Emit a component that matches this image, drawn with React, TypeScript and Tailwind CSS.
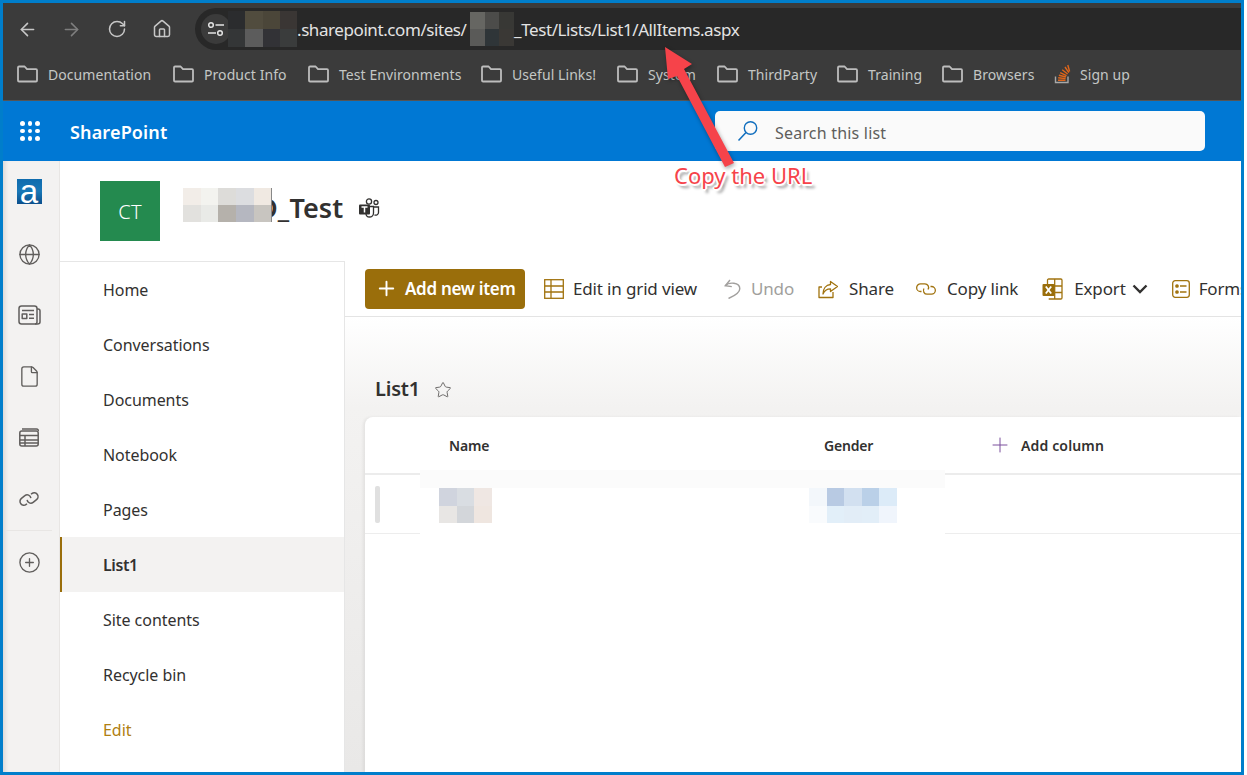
import React from "react";
import { ArrowLeft, ArrowRight, RotateCw, House, Globe, File, CirclePlus, Plus, Star } from "lucide-react";

const font = "font-['Noto_Sans','Open_Sans',sans-serif]";

function Pixels({ cols, colors, cellW, cellH, className }: { cols: number; colors: string[]; cellW: number; cellH: number; className?: string }) {
  return (
    <div className={`grid shrink-0 ${className ?? ""}`} style={{ gridTemplateColumns: `repeat(${cols}, ${cellW}px)`, gridAutoRows: `${cellH}px` }}>
      {colors.map((c, i) => <div key={i} style={{ background: c }} />)}
    </div>
  );
}

function FolderIcon() {
  return (
    <svg width="21" height="18" viewBox="0 0 21 18" fill="none" className="shrink-0">
      <path d="M1 15V2.6C1 2 1.5 1.5 2.1 1.5H7.6L10 4.2H19C19.6 4.2 20 4.7 20 5.2V15.4C20 16 19.6 16.5 19 16.5H2.1C1.5 16.5 1 16 1 15.4Z" stroke="#bdbdbd" strokeWidth="1.8" strokeLinejoin="round" />
    </svg>
  );
}

function SOIcon() {
  return (
    <svg width="17" height="20" viewBox="0 0 17 20" fill="none" className="shrink-0">
      <path d="M1.5 12.5V18.5H14V12.5" stroke="#a8a8a8" strokeWidth="1.4" />
      <path d="M4 16.2H11.5M4.2 13.8L11.6 14.6M4.9 11.3L12 13M6.2 8.6L12.6 11.6M8.2 5.8L13.6 10M11 3L14.8 8.6M13.8 1L15.6 7.5" stroke="#e0661a" strokeWidth="1.4" />
    </svg>
  );
}

function Bookmark({ label, w, so }: { label: string; w: number; so?: boolean }) {
  return (
    <div className={`flex items-center shrink-0 ${so ? "gap-[9px]" : "gap-[10px]"}`}>
      {so ? <SOIcon /> : <FolderIcon />}
      <span className="text-[14px] text-[#c4c7c5] whitespace-nowrap tracking-[0.07px]" style={{ width: w }}>{label}</span>
    </div>
  );
}

function Tune() {
  return (
    <svg width="18" height="16" viewBox="0 0 18 16" fill="none">
      <circle cx="4" cy="4" r="2.3" stroke="#e3e3e3" strokeWidth="1.5" />
      <path d="M8.5 4H17M1 12H9" stroke="#e3e3e3" strokeWidth="1.5" />
      <circle cx="13" cy="12" r="2.3" stroke="#e3e3e3" strokeWidth="1.5" />
    </svg>
  );
}

function Waffle() {
  return (
    <div className="grid grid-cols-3 gap-[3px] w-[20px]">
      {Array.from({ length: 9 }).map((_, i) => <div key={i} className="w-[4.5px] h-[4.5px] rounded-full bg-white" />)}
    </div>
  );
}

function SearchIcon() {
  return (
    <svg width="22" height="22" viewBox="0 0 22 22" fill="none">
      <circle cx="13.5" cy="8" r="6.2" stroke="#106ebe" strokeWidth="1.4" />
      <path d="M9 12.5L1.5 20.5" stroke="#106ebe" strokeWidth="1.5" />
    </svg>
  );
}

function RailNews() {
  return (
    <svg width="23" height="20" viewBox="0 0 23 20" fill="none" stroke="#605e5c" strokeWidth="1.5" strokeLinejoin="round">
      <path d="M19 4V17C19 18 18.2 19 17 19H3.5C2 19 1 18 1 16.5V3.5C1 2 2 1 3.5 1H16.5C18 1 19 2 19 3.5Z" />
      <path d="M19 4H20C21.2 4 22 4.8 22 6V17C22 18.2 21 19 19.5 19H17" />
      <rect x="4.2" y="9" width="4.6" height="4.6" />
      <path d="M4 5.5H16M11 9.5H16M11 13.2H16" />
    </svg>
  );
}

function RailLink() {
  return (
    <svg width="22" height="22" viewBox="0 0 22 22" fill="none" stroke="#605e5c" strokeWidth="1.5">
      <g transform="translate(1 4) rotate(-38 10 7)">
        <path d="M5.5 9.5H4.5A3.7 3.7 0 0 1 4.5 1.8H8.8A3.7 3.7 0 0 1 12 7.5" />
        <path d="M14.5 4.5H15.5A3.7 3.7 0 0 1 15.5 12.2H11.2A3.7 3.7 0 0 1 8 6.5" />
      </g>
    </svg>
  );
}

function RailTable() {
  return (
    <svg width="22" height="20" viewBox="0 0 22 20" fill="none" stroke="#605e5c" strokeWidth="1.5" strokeLinejoin="round">
      <rect x="1.8" y="3" width="18.4" height="15" rx="2" />
      <path d="M4 1H18.5C20 1 20.5 2 20.2 3M2 7.5H20M2 12H20M2 15H20M7 7.5V18" />
    </svg>
  );
}

function GridIcon() {
  return (
    <svg width="20" height="20" viewBox="0 0 20 20" fill="none" stroke="#a1730f" strokeWidth="1.3">
      <rect x="0.7" y="0.7" width="18.6" height="18.6" />
      <path d="M0.7 7H19.3M0.7 13H19.3M7 0.7V19.3" />
    </svg>
  );
}

function UndoIcon() {
  return (
    <svg width="17" height="20" viewBox="0 0 17 20" fill="none" stroke="#a19f9d" strokeWidth="1.4">
      <path d="M6 1L1.2 6.8L7.8 7.6" />
      <path d="M1.2 6.8C5 2.8 15.8 3 15.8 9.8C15.8 13.5 11.5 16.5 4.5 19.5" />
    </svg>
  );
}

function ShareIcon() {
  return (
    <svg width="20" height="20" viewBox="0 0 20 20" fill="none" stroke="#a1730f" strokeWidth="1.3" strokeLinejoin="round">
      <path d="M4 8H1V18.5H15V13" />
      <path d="M12.5 2.5L19.5 7.5L12.5 12.5V9.8C9 9.8 6.5 11 5 15C5 9.5 8 5.8 12.5 5.5Z" />
    </svg>
  );
}

function LinkIcon() {
  return (
    <svg width="20" height="14" viewBox="0 0 20 14" fill="none" stroke="#a1730f" strokeWidth="1.3">
      <path d="M5.5 9.5H4.5A3.7 3.7 0 0 1 4.5 1.8H8.8A3.7 3.7 0 0 1 12 7.5" />
      <path d="M14.5 4.5H15.5A3.7 3.7 0 0 1 15.5 12.2H11.2A3.7 3.7 0 0 1 8 6.5" />
    </svg>
  );
}

function ExcelIcon() {
  return (
    <svg width="21" height="22" viewBox="0 0 21 22" fill="none">
      <path d="M5.5 6V2.2C5.5 1.5 6 1 6.7 1H18.8C19.5 1 20 1.5 20 2.2V19.8C20 20.5 19.5 21 18.8 21H6.7" stroke="#a1730f" strokeWidth="1.3" />
      <path d="M12.7 1V21M5.5 8H20M12.7 14.5H20" stroke="#a1730f" strokeWidth="1.3" />
      <rect x="0.5" y="6" width="12" height="12" rx="1" fill="#9a6e0b" />
      <path d="M3.8 8.5L9.2 15.5M9.2 8.5L3.8 15.5" stroke="#fff" strokeWidth="1.8" />
    </svg>
  );
}

function FormsIcon() {
  return (
    <svg width="18" height="18" viewBox="0 0 18 18" fill="none" stroke="#a1730f" strokeWidth="1.3">
      <rect x="0.7" y="0.7" width="16.6" height="16.6" rx="2.5" />
      <circle cx="5" cy="6" r="1.2" fill="#a1730f" />
      <circle cx="5" cy="12" r="1.2" fill="#a1730f" />
      <path d="M8 6H14.5M8 12H14.5" />
    </svg>
  );
}

function TeamsIcon() {
  return (
    <svg width="22" height="22" viewBox="0 0 22 22" fill="none">
      <circle cx="11" cy="4.5" r="2.6" stroke="#323130" strokeWidth="1.3" />
      <circle cx="18" cy="5.5" r="2" stroke="#323130" strokeWidth="1.3" />
      <path d="M15 10H20.5V15.5C20.5 17.5 18.5 18.5 16.5 18" stroke="#323130" strokeWidth="1.3" />
      <path d="M9 9.5H15.5V16C15.5 18.5 13.5 20 11.5 20C9.5 20 8 18.5 8 16.5" stroke="#323130" strokeWidth="1.3" />
      <rect x="1" y="7.5" width="11" height="10" rx="1" fill="#323130" />
      <path d="M3.5 10H9.5M6.5 10V15.5" stroke="#fff" strokeWidth="1.5" />
    </svg>
  );
}

function NavItem({ label, active, edit }: { label: string; active?: boolean; edit?: boolean }) {
  const tone = active
    ? "bg-[#f3f2f1] border-l-[2px] border-[#9a6e0b] pl-[41px] font-semibold text-[#323130] tracking-[-0.4px]"
    : edit
      ? "pl-[43px] text-[#b07f12] tracking-[-0.05px]"
      : "pl-[43px] text-[#323130] tracking-[-0.05px]";
  return <div className={`h-[55px] flex items-center pt-[1px] text-[16px] ${tone}`}>{label}</div>;
}

function Cmd({ icon, label, ml, muted, gap }: { icon: React.ReactNode; label: string; ml: number; muted?: boolean; gap: number }) {
  return (
    <div className="flex items-center shrink-0" style={{ marginLeft: ml, gap }}>
      <div className="w-[21px] flex justify-center shrink-0">{icon}</div>
      <span className={`text-[17px] tracking-[-0.15px] whitespace-nowrap pt-[1px] ${muted ? "text-[#a19f9d]" : "text-[#323130]"}`}>{label}</span>
    </div>
  );
}

export default function App() {
  return (
    <div className={`w-[1247px] h-[775px] bg-white relative ${font}`}>
      <div className="w-[1244px] h-[775px] border-t-[3px] border-b-[3px] border-x-[3px] border-[#007ecb] flex flex-col overflow-hidden">
        {/* browser toolbar */}
        <div className="h-[47px] bg-[#3b3b3b] flex items-end shrink-0">
          <div className="h-[42px] flex items-center w-[192px] pl-[14px] shrink-0 text-[#c7c7c7]">
            <ArrowLeft size={21} strokeWidth={1.8} />
            <ArrowRight size={21} strokeWidth={1.8} className="ml-[23px] text-[#7e7e7e]" />
            <RotateCw size={20} strokeWidth={1.8} className="ml-[25px]" />
            <House size={20} strokeWidth={1.8} className="ml-[25px]" />
          </div>
          <div className="h-[42px] flex-1 bg-[#282828] rounded-l-full flex items-center pl-[6px] text-[17px] text-[#e3e3e3] tracking-[-0.42px] whitespace-nowrap">
            <div className="w-[30px] h-[30px] rounded-full bg-[#3b3b3b] flex items-center justify-center shrink-0 -mr-[3px]"><Tune /></div>
            <Pixels cols={4} cellW={17.25} cellH={18} colors={["#2b2c2e", "#514c3e", "#4b4639", "#3a3634", "#343637", "#5c5c5c", "#323236", "#3a3c3c"]} />
            <span className="w-[173px] pt-[1px]">.sharepoint.com/sites/</span>
            <Pixels cols={3} cellW={14.7} cellH={17} colors={["#666662", "#4c4c4a", "#383835", "#5a5a58", "#2f3538", "#3a3835"]} />
            <span className="pt-[1px]">_Test/Lists/List1/AllItems.aspx</span>
          </div>
        </div>
        {/* bookmarks */}
        <div className="h-[51px] bg-[#3b3b3b] border-b border-[#555] flex items-center pl-[14px] pb-[2px] gap-[22px] shrink-0">
          <Bookmark label="Documentation" w={103} />
          <Bookmark label="Product Info" w={82} />
          <Bookmark label="Test Environments" w={120} />
          <Bookmark label="Useful Links!" w={83} />
          <Bookmark label="System" w={47} />
          <Bookmark label="ThirdParty" w={67} />
          <Bookmark label="Training" w={52} />
          <Bookmark label="Browsers" w={59} />
          <Bookmark label="Sign up" w={50} so />
        </div>
        {/* suite bar */}
        <div className="h-[60px] bg-[#0078d4] flex items-center shrink-0">
          <div className="w-[67px] pl-[17px] shrink-0"><Waffle /></div>
          <div className="text-[18px] font-semibold text-white w-[645px] tracking-[0.15px] shrink-0 pt-[2px]">SharePoint</div>
          <div className="w-[490px] h-[40px] bg-[#fafafa] rounded-[5px] flex items-center pl-[22px] gap-[16px]">
            <SearchIcon />
            <span className="text-[16px] text-[#605e5c] tracking-[0.2px] pt-[3px]">Search this list</span>
          </div>
        </div>
        {/* body */}
        <div className="flex-1 flex min-h-0">
          {/* rail */}
          <div className="w-[57px] shrink-0 bg-[#f3f2f1] border-r border-[#e8e6e4] shadow-[inset_5px_0_5px_-3px_rgba(0,0,0,0.12)] flex flex-col items-center pr-[4px]">
            <div className="mt-[18px] w-[25px] h-[25px] bg-gradient-to-b from-[#0f6cae] via-[#1877b6] to-[#0b4f8c] flex items-end justify-center text-white text-[33px] leading-[25px] font-['Liberation_Sans',sans-serif]">a</div>
            <div className="mt-[38px] h-[24px] flex items-center"><Globe size={23} strokeWidth={1.4} className="text-[#605e5c]" /></div>
            <div className="mt-[37px] h-[24px] flex items-center"><RailNews /></div>
            <div className="mt-[37px] h-[24px] flex items-center"><File size={23} strokeWidth={1.4} className="text-[#605e5c]" /></div>
            <div className="mt-[38px] h-[24px] flex items-center"><RailTable /></div>
            <div className="mt-[37px] h-[24px] flex items-center"><RailLink /></div>
            <div className="mt-[19px] w-[46px] h-px bg-[#e8e6e4]" />
            <div className="mt-[19px] h-[24px] flex items-center"><CirclePlus size={23} strokeWidth={1.4} className="text-[#605e5c]" /></div>
          </div>
          {/* main */}
          <div className="flex-1 flex flex-col min-w-0">
            {/* site header */}
            <div className="h-[100px] flex shrink-0 pt-[20px] pl-[40px] relative">
              <div className="w-[60px] h-[60px] bg-[#248a4f] flex items-center justify-center text-white text-[20px] font-light shrink-0 tracking-[0.3px] pt-[2px]">CT</div>
              <div className="ml-[98px] mt-[9px] h-[36px] text-[27px] font-semibold text-[#323130] flex items-center tracking-[0.1px]">D_Test</div>
              <div className="ml-[15px] mt-[16px]"><TeamsIcon /></div>
              <Pixels cols={5} cellW={17.7} cellH={17} className="absolute left-[123px] top-[27px] border-r-[1px] border-[#888]" colors={["#f2ede8", "#f3f3ef", "#dddcd9", "#dcdde0", "#f0e9e2", "#e2e1de", "#e9eae7", "#b5b1ab", "#b5b7c0", "#c8c5c0"]} />
            </div>
            <div className="flex-1 flex min-h-0">
              {/* left nav */}
              <div className="w-[285px] shrink-0 bg-white border-t border-r border-[#e6e6e6]">
                <NavItem label="Home" />
                <NavItem label="Conversations" />
                <NavItem label="Documents" />
                <NavItem label="Notebook" />
                <NavItem label="Pages" />
                <NavItem label="List1" active />
                <NavItem label="Site contents" />
                <NavItem label="Recycle bin" />
                <NavItem label="Edit" edit />
              </div>
              {/* content */}
              <div className="flex-1 min-w-0 flex flex-col overflow-hidden">
                <div className="h-[56px] shrink-0 bg-white border-b border-[#e4e4e4] flex items-center pl-[20px]">
                  <div className="w-[160px] h-[40px] bg-[#9a6e0b] rounded-[4px] flex items-center pl-[10px] gap-[7px] text-white text-[17px] font-semibold tracking-[-0.3px] shrink-0">
                    <Plus size={23} strokeWidth={2} />
                    <span className="pt-[1px]">Add new item</span>
                  </div>
                  <Cmd icon={<GridIcon />} label="Edit in grid view" ml={18} gap={9} />
                  <Cmd icon={<UndoIcon />} label="Undo" ml={25} gap={8} muted />
                  <Cmd icon={<ShareIcon />} label="Share" ml={23} gap={11} />
                  <Cmd icon={<LinkIcon />} label="Copy link" ml={22} gap={10} />
                  <Cmd icon={<ExcelIcon />} label="Export" ml={24} gap={11} />
                  <svg width="16" height="10" viewBox="0 0 16 10" fill="none" stroke="#323130" strokeWidth="2.4" className="ml-[6px] shrink-0"><path d="M1.5 1.5L8 8L14.5 1.5" /></svg>
                  <Cmd icon={<FormsIcon />} label="Forms" ml={23} gap={7} />
                </div>
                <div className="flex-1 min-h-0 bg-gradient-to-b from-white via-[#f3f2f1] via-[20%] to-[#e9e8e7] pl-[20px] flex flex-col">
                  <div className="h-[100px] shrink-0 flex items-center pt-[43px] pl-[10px] gap-[14px]">
                    <span className="text-[20px] font-semibold text-[#323130] tracking-[-0.2px]">List1</span>
                    <Star size={18} strokeWidth={1.2} className="text-[#605e5c] mt-[3px]" />
                  </div>
                  <div className="flex-1 bg-white rounded-tl-[8px] flex flex-col relative shadow-[-2px_0_3px_rgba(0,0,0,0.06)]">
                    <div className="h-[58px] border-b-[2px] border-[#ececec] flex items-center text-[14px] font-semibold text-[#323130] shrink-0 tracking-[-0.2px]">
                      <span className="ml-[84px] w-[375px]">Name</span>
                      <span className="w-[164px]">Gender</span>
                      <Plus size={24} strokeWidth={1} className="text-[#7a4f9c]" />
                      <span className="ml-[9px] tracking-[0.15px]">Add column</span>
                    </div>
                    <div className="h-[59px] border-b border-[#ededed] flex items-center shrink-0 pl-[10px]">
                      <div className="w-[5px] h-[37px] bg-[#e0e0e0] rounded-[2px]" />
                    </div>
                    {/* redaction overlay on the first row */}
                    <div className="absolute left-[55px] top-[53px] w-[525px] h-[65px] bg-white">
                      <div className="h-[18px] bg-[#fbfbfb]" />
                      <Pixels cols={3} cellW={17.7} cellH={17.5} className="absolute left-[19px] top-[18px]" colors={["#d0d4de", "#d9dde2", "#efe7e3", "#e8e6e4", "#d3d6da", "#efe6e0"]} />
                      <Pixels cols={5} cellW={17.6} cellH={17.5} className="absolute left-[389px] top-[18px]" colors={["#f3f7fb", "#b8cae3", "#d2e0f0", "#bad0e8", "#dcebf8", "#f9fbfd", "#e2eff9", "#e2edf7", "#e2eef8", "#f0f5fc"]} />
                    </div>
                  </div>
                </div>
              </div>
            </div>
          </div>
        </div>
      </div>
      {/* annotation */}
      <svg width="120" height="140" viewBox="660 40 120 140" className="absolute left-[660px] top-[40px] drop-shadow-[1px_2px_2px_rgba(0,0,0,0.35)]">
        <polygon points="665,47 692,64 684,69 734,163 725,167 677,76 668,79" fill="#f6434a" />
      </svg>
      <div className="absolute left-[674px] top-[160px] text-[22px] leading-[30px] text-[#f6434a] tracking-[0px] whitespace-nowrap [text-shadow:-1px_-1px_0_#fff,1px_-1px_0_#fff,-1px_1px_0_#fff,1px_1px_0_#fff,0_-2px_0_#fff,0_2px_0_#fff,-2px_0_0_#fff,2px_0_0_#fff,3px_4px_3px_rgba(0,0,0,0.45)]">Copy the URL</div>
    </div>
  );
}
